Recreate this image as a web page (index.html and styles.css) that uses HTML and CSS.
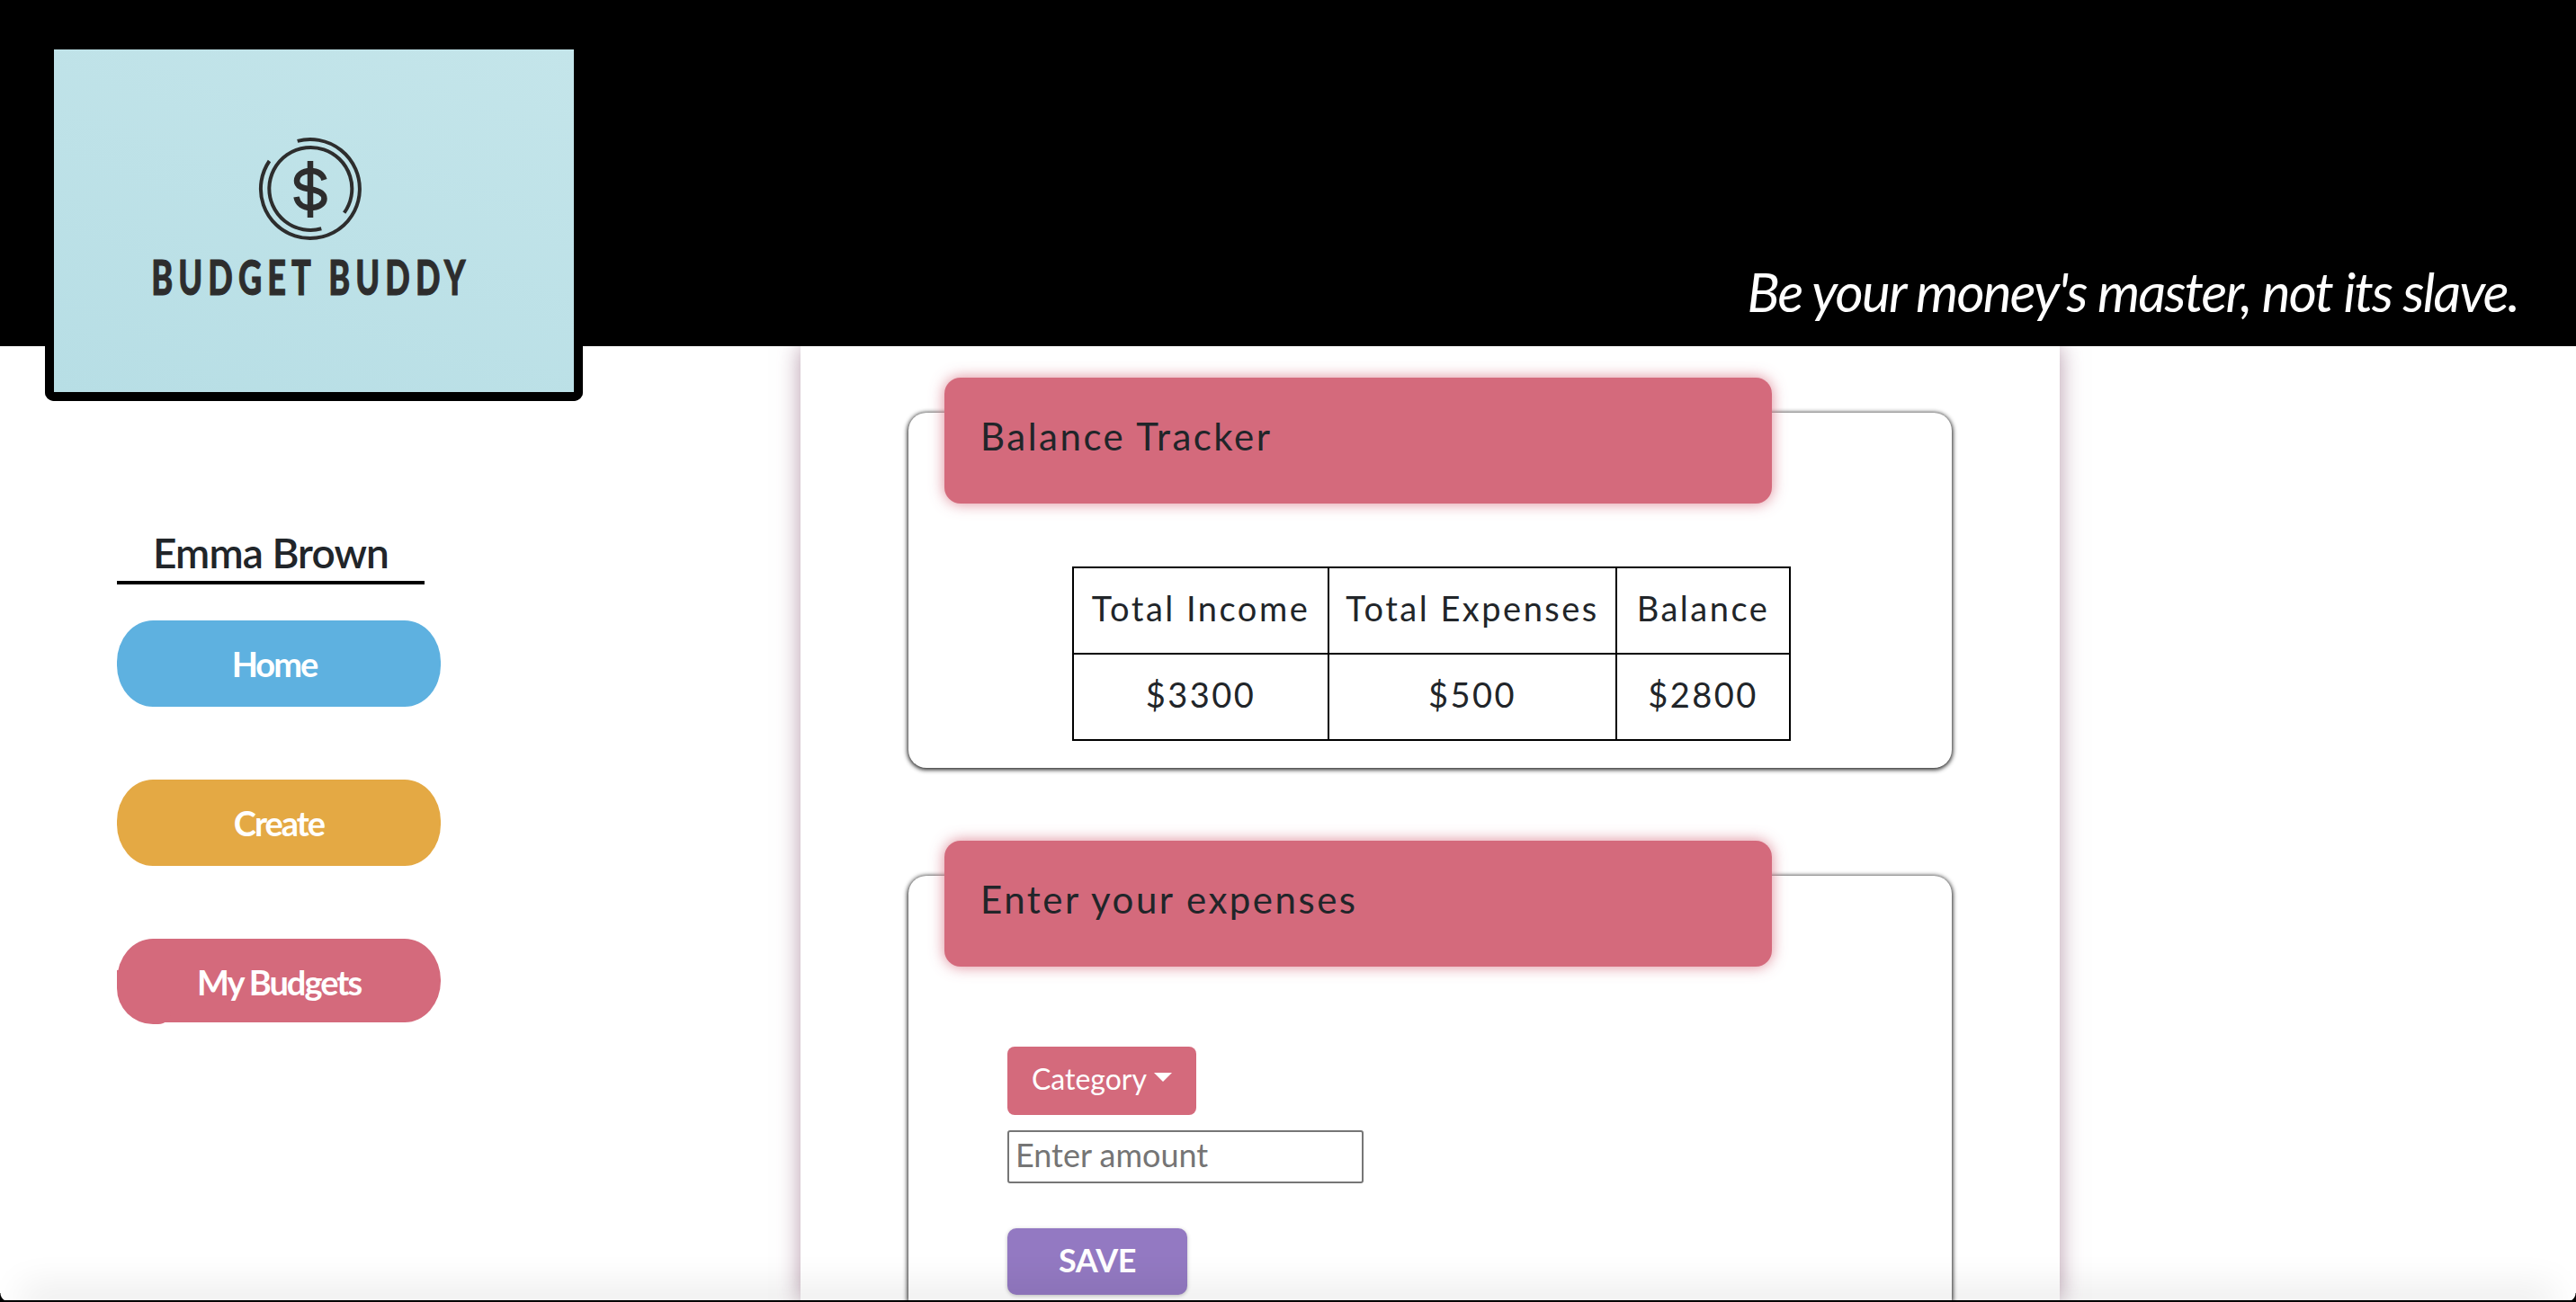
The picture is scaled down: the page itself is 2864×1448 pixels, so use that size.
FILE: index.html
```html
<!DOCTYPE html>
<html>
<head>
    <title>Budget Buddy</title>
    <link rel="stylesheet" href="styles.css">
</head>
<body>
    <header class="topbar">
        <div class="logo">
            <svg class="logo-icon" viewBox="0 0 150 140" fill="none" stroke="#2d2d2d" stroke-width="4">
                <path d="M60.7 16.9 A55 55 0 1 1 29.5 39"/>
                <path d="M87.3 114.3 A46 46 0 1 1 112.7 96.7"/>
                <path d="M75 39 V102" stroke-width="6.5"/>
                <path d="M90.5 60 C88 52 82 50 75 50 C66 50 60 55 60 61 C60 67 65 69 75 70.5 C85 72 90.5 75 90.5 81 C90.5 87 84 91 75 91 C67 91 61 87 59.5 79" stroke-width="6.5"/>
            </svg>
            <div class="logo-name">BUDGET BUDDY</div>
        </div>
        <p class="tagline">Be your money's master, not its slave.</p>
    </header>

    <div class="page">
        <nav class="sidebar">
            <h2 class="username">Emma Brown</h2>
            <a class="nav-btn nav-home">Home</a>
            <a class="nav-btn nav-create">Create</a>
            <a class="nav-btn nav-budgets">My Budgets</a>
        </nav>

        <main class="content">
            <section class="card">
                <h3 class="card-title">Balance Tracker</h3>
                <table class="balance-table">
                    <tr>
                        <th class="col-income">Total Income</th>
                        <th class="col-expenses">Total Expenses</th>
                        <th class="col-balance">Balance</th>
                    </tr>
                    <tr>
                        <td>$3300</td>
                        <td>$500</td>
                        <td>$2800</td>
                    </tr>
                </table>
            </section>

            <section class="card card-form">
                <h3 class="card-title">Enter your expenses</h3>
                <form class="expense-form">
                    <button type="button" class="category-btn">Category<span class="caret"></span></button>
                    <input class="amount-input" type="text" placeholder="Enter amount">
                    <button type="button" class="save-btn">SAVE</button>
                </form>
            </section>
        </main>
    </div>

    <div class="window-edge"></div>
</body>
</html>
```

FILE: styles.css
```css
html, body {
    height: 100%;
}

body {
    margin: 0;
    height: 1448px;
    overflow: hidden;
    display: flex;
    flex-direction: column;
    background-color: #fff;
    color: #212529;
    font-family: Lato, "Open Sans", sans-serif;
}

/* header */
.topbar {
    flex: 0 0 385px;
    position: relative;
    z-index: 2;
    display: flex;
    justify-content: flex-end;
    align-items: flex-end;
    background-color: #000;
}

.tagline {
    margin: 0 64px 25px 0;
    color: #fff;
    font-size: 60px;
    font-style: italic;
    letter-spacing: -1.75px;
    line-height: 72px;
}

.logo {
    position: absolute;
    left: 50px;
    top: 55px;
    width: 578px;
    height: 381px;
    border: solid #000;
    border-width: 0 10px 10px 10px;
    border-radius: 0 0 10px 10px;
    background: linear-gradient(200deg, #c4e5ea, #b7dee5);
    color: #2d2d2d;
}

.logo-icon {
    display: block;
    width: 150px;
    height: 140px;
    margin: 85px 0 0 210px;
}

.logo-name {
    width: 578px;
    margin: 1px 0 0 -3px;
    font-size: 54px;
    line-height: 54px;
    font-weight: 900;
    letter-spacing: 9px;
    text-align: center;
    white-space: nowrap;
    transform: scaleX(0.67);
    -webkit-text-stroke: 1px #2d2d2d;
}

/* body area */
.page {
    flex: 1;
    min-height: 0;
    display: flex;
}

.sidebar {
    flex: 0 0 360px;
    margin-left: 130px;
    padding-top: 203px;
    display: flex;
    flex-direction: column;
    align-items: flex-start;
}

.username {
    width: 342px;
    margin: 0 0 40px;
    padding-bottom: 4px;
    border-bottom: 4px solid #000;
    font-size: 46px;
    font-weight: 600;
    line-height: 54px;
    text-align: center;
    letter-spacing: -0.9px;
}

.nav-btn {
    flex: none;
    position: relative;
    width: 360px;
    height: 96px;
    margin-bottom: 81px;
    border-radius: 40px / 46px;
    color: #fff;
    font-size: 38px;
    font-weight: 700;
    line-height: 96px;
    text-align: center;
    letter-spacing: -2px;
}

.nav-home {
    background-color: #5eb1e0;
    text-indent: -10px;
}

.nav-create {
    background-color: #e4a944;
}

.nav-budgets {
    height: 93px;
    background-color: #d46a7c;
}

/* the bottom left corner of this one sticks out a little */
.nav-budgets::before {
    content: "";
    position: absolute;
    left: 0;
    bottom: -2px;
    width: 60px;
    height: 60px;
    border-radius: 0 0 14px 40px;
    background-color: #d46a7c;
}

.content {
    flex: 0 0 1400px;
    margin-left: 400px;
    box-sizing: border-box;
    padding: 74px 120px 0;
    background-color: #fff;
    box-shadow: 0 0 24px rgba(120, 70, 100, 0.55);
}

.card {
    height: 395px;
    margin-bottom: 120px;
    box-sizing: border-box;
    padding: 0 40px;
    border-radius: 20px;
    background-color: #fff;
    box-shadow: 0 1px 5px 1px rgba(0, 0, 0, 0.9);
}

/* the second card runs on below the window */
.card-form {
    height: 472px;
    margin-bottom: 0;
    border-radius: 20px 20px 0 0;
}

.card-title {
    width: 920px;
    height: 140px;
    margin: 0;
    position: relative;
    top: -39px;
    box-sizing: border-box;
    padding: 41px 40px 0;
    border-radius: 18px;
    background-color: #d46a7c;
    box-shadow: 0 0 16px rgba(212, 106, 124, 0.8);
    font-size: 42px;
    font-weight: 400;
    line-height: 48px;
    letter-spacing: 2.5px;
}

.balance-table {
    margin: 31px 0 0 142px;
    border-collapse: collapse;
    font-size: 38px;
    letter-spacing: 2.5px;
}

.balance-table th,
.balance-table td {
    height: 96px;
    padding: 0 0 7px;
    box-sizing: border-box;
    border: 2px solid #000;
    font-weight: 400;
    text-align: center;
}

.col-income {
    width: 284px;
}

.col-expenses {
    width: 320px;
}

.col-balance {
    width: 193px;
}

.expense-form {
    display: flex;
    flex-direction: column;
    align-items: flex-start;
    margin: 50px 0 0 70px;
}

.category-btn {
    width: 210px;
    height: 76px;
    padding: 0 0 5px;
    border: none;
    border-radius: 8px;
    background-color: #d46a7c;
    color: #fff;
    font-family: inherit;
    font-size: 32px;
}

.caret {
    display: inline-block;
    margin-left: 8px;
    vertical-align: 9px;
    border-top: 10px solid #fff;
    border-left: 10px solid transparent;
    border-right: 10px solid transparent;
}

.amount-input {
    width: 396px;
    height: 59px;
    margin-top: 17px;
    box-sizing: border-box;
    padding: 0 7px 5px;
    border: 2px solid #767676;
    border-radius: 3px;
    font-family: inherit;
    font-size: 36px;
}

.amount-input::placeholder {
    color: #757575;
}

.save-btn {
    width: 200px;
    height: 74px;
    margin-top: 50px;
    padding: 0 0 5px;
    border: none;
    border-radius: 10px;
    background-color: #9379c2;
    box-shadow: 0 1px 4px rgba(0, 0, 0, 0.25);
    color: #fff;
    font-family: inherit;
    font-size: 36px;
    font-weight: 700;
    letter-spacing: -0.5px;
}

/* bottom of the window: black line, soft shade above it, small round corners */
.window-edge {
    flex: 0 0 2px;
    position: relative;
    z-index: 3;
    background-color: #000;
}

.window-edge::before {
    content: "";
    position: absolute;
    left: 40px;
    right: 40px;
    bottom: 0;
    height: 1px;
    box-shadow: 0 0 40px 16px rgba(0, 0, 0, 0.085);
}

.window-edge::after {
    content: "";
    position: absolute;
    left: 0;
    right: 0;
    bottom: 0;
    height: 10px;
    background:
        radial-gradient(circle at 100% 0, transparent 9px, #000 10px) left bottom / 10px 10px no-repeat,
        radial-gradient(circle at 0 0, transparent 9px, #000 10px) right bottom / 10px 10px no-repeat;
}
```
